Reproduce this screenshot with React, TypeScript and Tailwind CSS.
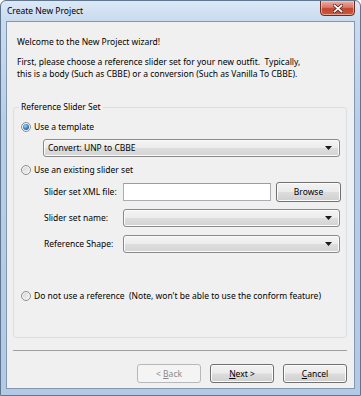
import React from "react";

function Radio({ checked }: { checked?: boolean }) {
  return (
    <span className="flex h-[10px] w-[10px] shrink-0 items-center justify-center rounded-full border border-[#8e8f8f] bg-[linear-gradient(135deg,#d4d4d4,#f7f7f7)] shadow-[inset_0_0_0_1px_#f4f4f4]">
      {checked && (
        <span className="h-[6px] w-[6px] rounded-full bg-[radial-gradient(circle_at_40%_35%,#9ad9ff_0%,#2a7bc0_55%,#124e8c_100%)]" />
      )}
    </span>
  );
}

function Arrow() {
  return (
    <svg width="7" height="4" viewBox="0 0 7 4" className="shrink-0">
      <path d="M0 0h7L3.5 4z" fill="#1a1a1a" />
    </svg>
  );
}

function Combo({ text }: { text?: string }) {
  return (
    <div className="flex h-[18px] flex-1 items-center rounded-[3px] border border-[#8a8a8a] bg-[linear-gradient(#f4f4f4_0%,#ececec_48%,#dedede_52%,#d3d3d3_100%)] pl-[4px] pr-[7px] shadow-[inset_0_0_0_1px_#fbfbfb]">
      <span className="flex-1 leading-none">{text}</span>
      <Arrow />
    </div>
  );
}

function Button({
  children,
  disabled,
}: {
  children: React.ReactNode;
  disabled?: boolean;
}) {
  return (
    <div
      className={
        disabled
          ? "flex h-[19px] w-[64px] items-center justify-center whitespace-pre rounded-[3px] border border-[#b5b9bc] bg-[#f4f4f4] text-[#8a8a8a]"
          : "flex h-[19px] w-[64px] items-center justify-center whitespace-pre rounded-[3px] border border-[#707070] bg-[linear-gradient(#f2f2f2_0%,#ebebeb_48%,#dddddd_52%,#cfcfcf_100%)] text-black shadow-[inset_0_0_0_1px_#fcfcfc]"
      }
    >
      {children}
    </div>
  );
}

export default function App() {
  return (
    <div className="relative h-[396px] w-[361px] overflow-hidden rounded-t-[6px] border border-[#5f7590] bg-[linear-gradient(#dce8f5_0px,#c9dbef_20px,#b8cee8_120px,#b2cae6_100%)] font-['Noto_Sans',sans-serif] text-[8.5px] leading-[12px] text-black">
      {/* title bar */}
      <div className="flex h-[20px] items-center pl-[6px] text-[8.5px] text-black">
        Create New Project
      </div>

      {/* close button */}
      <div className="absolute right-[5px] top-[-1px] flex h-[16px] w-[35px] items-center justify-center rounded-b-[4px] border border-[#6b2a22] bg-[linear-gradient(#eab0a4_0%,#d9786a_45%,#c4452f_55%,#c85a3e_100%)] shadow-[inset_0_0_0_1px_rgba(255,210,200,0.6)]">
        <svg width="10" height="9" viewBox="0 0 10 9">
          <path
            d="M1.5 1.5l7 6M8.5 1.5l-7 6"
            stroke="#4a1a14"
            strokeWidth="3.2"
            strokeLinecap="square"
          />
          <path
            d="M1.5 1.5l7 6M8.5 1.5l-7 6"
            stroke="#ffffff"
            strokeWidth="1.7"
            strokeLinecap="square"
          />
        </svg>
      </div>

      {/* content */}
      <div className="ml-[5px] mr-[5px] flex h-[368px] flex-col border border-[#8397b1] bg-[#f0f0f0]">
        <div className="pl-[10px] pt-[14px]">Welcome to the New Project wizard!</div>
        <div className="mt-[8px] pl-[10px]">
          <div>First, please choose a reference slider set for your new outfit.&nbsp; Typically,</div>
          <div>this is a body (Such as CBBE) or a conversion (Such as Vanilla To CBBE).</div>
        </div>

        {/* group box */}
        <div className="relative ml-[6px] mr-[7px] mt-[27px] flex h-[231px] flex-col rounded-[3px] border border-[#d5dfe5] pl-[7px] pr-[6px]">
          <div className="absolute left-[5px] top-[-7px] bg-[#f0f0f0] px-[2px]">Reference Slider Set</div>

          <div className="mt-[13px] flex h-[12px] items-center gap-[3px]">
            <Radio checked />
            <span>Use a template</span>
          </div>

          <div className="ml-[22px] mt-[6px] flex">
            <Combo text="Convert: UNP to CBBE" />
          </div>

          <div className="mt-[7px] flex h-[12px] items-center gap-[3px]">
            <Radio />
            <span>Use an existing slider set</span>
          </div>

          <div className="ml-[23px] mt-[6px] flex h-[20px] items-center">
            <span className="w-[79px] shrink-0">Slider set XML file:</span>
            <div className="h-[18px] w-[148px] shrink-0 border border-[#abadb3] border-t-[#9a9da6] bg-white" />
            <div className="ml-[5px] flex h-[20px] w-[65px] shrink-0 items-center justify-center rounded-[3px] border border-[#707070] bg-[linear-gradient(#f2f2f2_0%,#ebebeb_48%,#dddddd_52%,#cfcfcf_100%)] shadow-[inset_0_0_0_1px_#fcfcfc]">
              Browse
            </div>
          </div>

          <div className="ml-[23px] mt-[7px] flex h-[18px] items-center">
            <span className="w-[79px] shrink-0">Slider set name:</span>
            <Combo />
          </div>

          <div className="ml-[23px] mt-[8px] flex h-[18px] items-center">
            <span className="w-[79px] shrink-0">Reference Shape:</span>
            <Combo />
          </div>

          <div className="mt-[37px] flex h-[12px] items-center gap-[3px]">
            <Radio />
            <span className="whitespace-pre">Do not use a reference  (Note, won't be able to use the conform feature)</span>
          </div>
        </div>

        {/* separator */}
        <div className="ml-[6px] mr-[7px] mt-[12px] h-px bg-[#a0a0a0]" />

        {/* buttons */}
        <div className="mr-[7px] mt-[13px] flex justify-end gap-[9px]">
          <Button disabled>
            <span>{"< "}</span>
            <span className="underline">B</span>
            <span>ack</span>
          </Button>
          <Button>
            <span className="underline">N</span>
            <span>{"ext >"}</span>
          </Button>
          <Button>
            <span className="underline">C</span>
            <span>ancel</span>
          </Button>
        </div>
      </div>
    </div>
  );
}
